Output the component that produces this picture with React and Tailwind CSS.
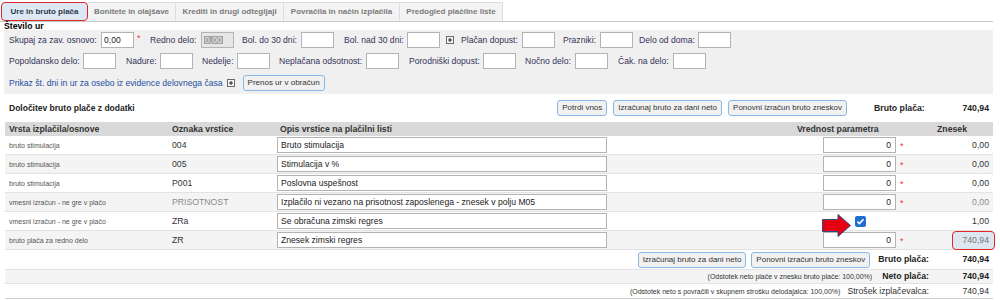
import React from "react";

const tabs = [
  { label: "Ure in bruto plača", w: "w-[87px]", active: true },
  { label: "Bonitete in olajšave", w: "w-[88px]" },
  { label: "Krediti in drugi odtegljaji", w: "w-[108px]" },
  { label: "Povračila in način izplačila", w: "w-[116px]" },
  { label: "Predogled plačilne liste", w: "w-[103px]" },
];

const rows = [
  { type: "bruto stimulacija", code: "004", desc: "Bruto stimulacija", amt: "0,00" },
  { type: "bruto stimulacija", code: "005", desc: "Stimulacija v %", amt: "0,00" },
  { type: "bruto stimulacija", code: "P001", desc: "Poslovna uspešnost", amt: "0,00" },
  {
    type: "vmesni izračun - ne gre v plačo",
    code: "PRISOTNOST",
    desc: "Izplačilo ni vezano na prisotnost zaposlenega - znesek v polju M05",
    amt: "0,00",
    muted: true,
  },
  { type: "vmesni izračun - ne gre v plačo", code: "ZRa", desc: "Se obračuna zimski regres", amt: "1,00", checkbox: true },
  { type: "bruto plača za redno delo", code: "ZR", desc: "Znesek zimski regres", amt: "740,94", highlight: true },
];

function Box({ value = "", className = "" }) {
  return (
    <input
      readOnly
      value={value}
      className={`w-[33px] h-[16px] border border-[#b3b3b3] bg-white px-[2px] text-[8.6px] text-[#222] outline-none ${className}`}
    />
  );
}

function Star({ className = "" }) {
  return <span className={`text-[9px] text-[#e53935] self-start mt-[2px] ${className}`}>*</span>;
}

function PlusBox({ className = "" }) {
  return (
    <svg width="8" height="8" viewBox="0 0 8 8" className={className}>
      <rect x="0.5" y="0.5" width="7" height="7" fill="#f7f7f7" stroke="#6b6b6b" />
      <path d="M2 4h4M4 2v4" stroke="#222" strokeWidth="1" />
    </svg>
  );
}

function Btn({ children, className = "" }) {
  return (
    <button className={`h-[16px] px-[4px] border border-[#8ab8e6] rounded-[3px] bg-[#f1f1f1] text-[8px] text-[#333] whitespace-nowrap ${className}`}>
      {children}
    </button>
  );
}

function Label({ children, w }) {
  return <span className={`${w} shrink-0 whitespace-nowrap text-[#34345a]`}>{children}</span>;
}

function Arrow() {
  return (
    <svg width="29" height="23" viewBox="0 0 29 23" className="absolute left-[-1px] top-[1px]">
      <polygon
        points="0.5,5.5 16,5.5 16,0.5 28.5,11.5 16,22.5 16,17.5 0.5,17.5"
        fill="#e60012"
        stroke="#2d4f86"
        strokeWidth="1"
      />
    </svg>
  );
}

export default function App() {
  return (
    <div className="w-[1000px] h-[300px] overflow-hidden bg-white font-['Liberation_Sans',Arial,sans-serif] text-[8.6px] text-[#333] leading-none">
      {/* tabs */}
      <div className="flex h-[22px] pt-[2px] pl-[1px] mr-[7px] border-b border-[#c9c9c9]">
        {tabs.map((t) =>
          t.active ? (
            <div
              key={t.label}
              className={`${t.w} h-[19px] flex items-center justify-center bg-[#dce8f4] border-[1.5px] border-[#e0262b] rounded-[4px] font-bold text-[8px] text-[#2e3a4a]`}
            >
              {t.label}
            </div>
          ) : (
            <div
              key={t.label}
              className={`${t.w} h-[19px] flex items-center justify-center bg-[#f3f3f3] border border-b-0 border-l-0 border-[#dcdcdc] font-bold text-[8px] text-[#7a7a7a]`}
            >
              {t.label}
            </div>
          )
        )}
      </div>

      <div className="pl-[4px] h-[8px] font-bold text-[8.7px] text-black leading-[9px]">Število ur</div>

      {/* hours panel */}
      <div className="ml-[4px] w-[989px] bg-[#f0f0f0] pt-[2px] pb-[4px] pl-[5px] flex flex-col gap-[5px]">
        <div className="flex items-center h-[16px]">
          <Label w="w-[92px]">Skupaj za zav. osnovo:</Label>
          <Box value="0,00" />
          <Star className="ml-[3px] w-[5px]" />
          <span className="ml-[8px]" />
          <Label w="w-[51px]">Redno delo:</Label>
          <div className="w-[33px] h-[16px] border border-[#b3b3b3] bg-[#e6e6e6] flex items-center pl-[2px]">
            <span className="bg-[#a3a3a3] text-[#e8e8e8] px-[1px]">0,00</span>
          </div>
          <span className="ml-[8px]" />
          <Label w="w-[59px]">Bol. do 30 dni:</Label>
          <Box />
          <span className="ml-[10px]" />
          <Label w="w-[63px]">Bol. nad 30 dni:</Label>
          <Box />
          <PlusBox className="ml-[6px]" />
          <span className="ml-[7px]" />
          <Label w="w-[61px]">Plačan dopust:</Label>
          <Box />
          <span className="ml-[8px]" />
          <Label w="w-[37px]">Prazniki:</Label>
          <Box />
          <span className="ml-[6px]" />
          <Label w="w-[59px]">Delo od doma:</Label>
          <Box />
        </div>
        <div className="flex items-center h-[16px]">
          <Label w="w-[74px]">Popoldansko delo:</Label>
          <Box />
          <span className="ml-[10px]" />
          <Label w="w-[34px]">Nadure:</Label>
          <Box />
          <span className="ml-[9px]" />
          <Label w="w-[35px]">Nedelje:</Label>
          <Box />
          <span className="ml-[9px]" />
          <Label w="w-[87px]">Neplačana odsotnost:</Label>
          <Box />
          <span className="ml-[10px]" />
          <Label w="w-[74px]">Porodniški dopust:</Label>
          <Box />
          <span className="ml-[9px]" />
          <Label w="w-[50px]">Nočno delo:</Label>
          <Box />
          <span className="ml-[10px]" />
          <Label w="w-[55px]">Čak. na delo:</Label>
          <Box />
        </div>
        <div className="flex items-center h-[16px] pt-[2px]">
          <span className="text-[#1f4f9e] whitespace-nowrap">Prikaz št. dni in ur za osebo iz evidence delovnega časa</span>
          <PlusBox className="ml-[4px]" />
          <Btn className="ml-[8px] h-[15px]">Prenos ur v obračun</Btn>
        </div>
      </div>

      {/* gross section */}
      <div className="mx-[5px] w-[988px]">
        <div className="mt-[5px] h-[18px] flex items-center pl-[4px]">
          <span className="font-bold text-[8.5px] text-[#222]">Določitev bruto plače z dodatki</span>
          <div className="ml-auto flex gap-[6px]">
            <Btn>Potrdi vnos</Btn>
            <Btn>Izračunaj bruto za dani neto</Btn>
            <Btn>Ponovni izračun bruto zneskov</Btn>
          </div>
          <span className="ml-[27px] w-[55px] font-bold text-[8.7px] text-[#222]">Bruto plača:</span>
          <span className="w-[64px] pr-[4px] text-right font-bold text-[8.7px] text-[#222]">740,94</span>
        </div>

        <div className="mt-[5px] h-[14px] bg-[#d9d9d9] flex items-center font-bold text-[8.7px] text-[#333]">
          <span className="w-[167px] pl-[4px]">Vrsta izplačila/osnove</span>
          <span className="w-[105px]">Oznaka vrstice</span>
          <span className="w-[520px] pl-[3px]">Opis vrstice na plačilni listi</span>
          <span>Vrednost parametra</span>
          <span className="flex-1 text-right pr-[26px]">Znesek</span>
        </div>

        {rows.map((r, i) => (
          <div
            key={r.code}
            className={`h-[19px] flex items-center border-b border-[#e3e3e3] ${i % 2 === 1 ? "bg-[#f4f4f4]" : "bg-white"}`}
          >
            <span className="w-[167px] pl-[4px] text-[7px] text-[#555555] whitespace-nowrap">{r.type}</span>
            <span className={`w-[105px] text-[8.7px] ${r.muted ? "text-[#8a8a8a]" : "text-[#333]"}`}>{r.code}</span>
            <input
              readOnly
              value={r.desc}
              className="w-[330px] h-[16px] border border-[#b3b3b3] bg-white pl-[3px] text-[8.6px] text-[#222] outline-none"
            />
            <span className="w-[216px]" />
            {r.checkbox ? (
              <div className="relative w-[73px] h-[16px]">
                <Arrow />
                <div className="absolute left-[32px] top-[3px] w-[11px] h-[11px] rounded-[2px] bg-[#1f6fd1] flex items-center justify-center">
                  <svg width="9" height="9" viewBox="0 0 9 9">
                    <path d="M1.5 4.6l2 2 4-4.4" fill="none" stroke="#fff" strokeWidth="1.6" />
                  </svg>
                </div>
              </div>
            ) : (
              <input
                readOnly
                value="0"
                className="w-[73px] h-[16px] border border-[#b3b3b3] bg-white pr-[4px] text-right text-[8.6px] text-[#222] outline-none"
              />
            )}
            <span className="w-[10px] pl-[4px] flex">{!r.checkbox && <Star />}</span>
            <div className="flex-1 flex justify-end">
              {r.highlight ? (
                <span className="w-[43px] h-[19px] -mr-[2px] flex items-center justify-end pr-[5px] bg-[#dde7f2] border-[1.5px] border-[#e0262b] rounded-[4px] text-[8.7px] text-[#777]">
                  {r.amt}
                </span>
              ) : (
                <span className={`pr-[4px] text-[8.7px] ${r.muted ? "text-[#8a8a8a]" : "text-[#333]"}`}>{r.amt}</span>
              )}
            </div>
          </div>
        ))}

        <div className="h-[20px] flex items-center justify-end border-b border-[#e3e3e3]">
          <div className="flex gap-[5px]">
            <Btn>Izračunaj bruto za dani neto</Btn>
            <Btn>Ponovni izračun bruto zneskov</Btn>
          </div>
          <span className="ml-[8px] font-bold text-[8.7px] text-[#222]">Bruto plača:</span>
          <span className="w-[64px] pr-[4px] text-right font-bold text-[8.7px] text-[#222]">740,94</span>
        </div>
        <div className="h-[14px] flex items-center justify-end bg-[#f4f4f4] border-b border-[#e3e3e3]">
          <span className="text-[7px] text-[#333]">(Odstotek neto plače v znesku bruto plače: 100,00%)</span>
          <span className="ml-[10px] font-bold text-[8.7px] text-[#222]">Neto plača:</span>
          <span className="w-[64px] pr-[4px] text-right font-bold text-[8.7px] text-[#222]">740,94</span>
        </div>
        <div className="h-[15px] flex items-center justify-end border-b border-[#cfcfcf]">
          <span className="text-[7px] text-[#333]">(Odstotek neto s povračili v skupnem strošku delodajalca: 100,00%)</span>
          <span className="ml-[7px] text-[8.7px] text-[#333]">Strošek izplačevalca:</span>
          <span className="w-[64px] pr-[4px] text-right text-[8.7px] text-[#333]">740,94</span>
        </div>
      </div>
    </div>
  );
}
